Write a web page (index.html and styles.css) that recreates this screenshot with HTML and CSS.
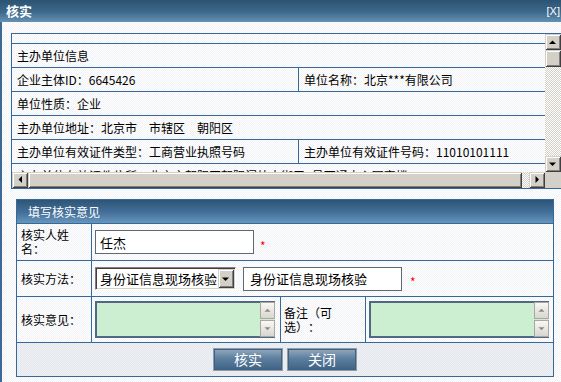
FILE: index.html
```html
<!DOCTYPE html>
<html>
<head>
	<meta charset="utf-8">
	<title>核实</title>
	<link rel="stylesheet" href="styles.css">
</head>
<body>
	<div class="dialog">
		<div class="dialog-title">
			<span class="dialog-name">核实</span>
			<span class="dialog-close">[X]</span>
		</div>
		<div class="dialog-body">
			<!-- unit info, scrolled view -->
			<div class="scroll-box">
				<div class="scroll-view">
					<div class="info-grid">
						<div class="info-cell wide"></div>
						<div class="info-cell wide">主办单位信息</div>
						<div class="info-cell">企业主体ID：6645426</div>
						<div class="info-cell">单位名称：北京***有限公司</div>
						<div class="info-cell wide">单位性质：企业</div>
						<div class="info-cell wide">主办单位地址：北京市　市辖区　朝阳区</div>
						<div class="info-cell">主办单位有效证件类型：工商营业执照号码</div>
						<div class="info-cell">主办单位有效证件号码：11010101111</div>
						<div class="info-cell wide">主办单位有效证件住所：北京市朝阳区朝阳门外大街甲6号万通中心写字楼</div>
					</div>
				</div>
				<div class="vscroll">
					<span class="sb-btn"><svg width="16" height="16" viewBox="0 0 16 16"><path d="M4 10h7L7.5 6.5z"/></svg></span>
					<span class="sb-thumb"></span>
					<span class="sb-track"></span>
					<span class="sb-btn"><svg width="16" height="16" viewBox="0 0 16 16"><path d="M4 6.5h7L7.5 10z"/></svg></span>
				</div>
				<div class="hscroll">
					<span class="sb-btn"><svg width="16" height="16" viewBox="0 0 16 16"><path d="M10 4v7L6.5 7.5z"/></svg></span>
					<span class="sb-thumb"></span>
					<span class="sb-track"></span>
					<span class="sb-btn"><svg width="16" height="16" viewBox="0 0 16 16"><path d="M6.5 4v7L10 7.5z"/></svg></span>
				</div>
				<div class="sb-corner"></div>
			</div>

			<!-- check form -->
			<div class="form-box">
				<div class="form-title">填写核实意见</div>
				<div class="form-grid">
					<div class="f-label">核实人姓名：</div>
					<div class="f-field span3">
						<input class="text-input" type="text" value="任杰">
						<span class="req">*</span>
					</div>

					<div class="f-label">核实方法：</div>
					<div class="f-field span3">
						<span class="combo">
							<span class="combo-text">身份证信息现场核验</span>
							<span class="combo-btn"><svg width="16" height="16" viewBox="0 0 16 16"><path d="M4 6.5h7L7.5 10z"/></svg></span>
						</span>
						<input class="text-input second" type="text" value="身份证信息现场核验">
						<span class="req far">*</span>
					</div>

					<div class="f-label">核实意见：</div>
					<div class="f-field">
						<div class="memo">
							<div class="memo-bar">
								<span class="memo-btn"><svg width="15" height="15" viewBox="0 0 15 15"><path d="M4 9h7L7.5 5.5z"/></svg></span>
								<span class="memo-btn"><svg width="15" height="15" viewBox="0 0 15 15"><path d="M4 6h7L7.5 9.5z"/></svg></span>
							</div>
						</div>
					</div>
					<div class="f-label narrow">备注（可选）：</div>
					<div class="f-field">
						<div class="memo">
							<div class="memo-bar">
								<span class="memo-btn"><svg width="15" height="15" viewBox="0 0 15 15"><path d="M4 9h7L7.5 5.5z"/></svg></span>
								<span class="memo-btn"><svg width="15" height="15" viewBox="0 0 15 15"><path d="M4 6h7L7.5 9.5z"/></svg></span>
							</div>
						</div>
					</div>
				</div>
				<div class="form-actions">
					<button class="btn">核实</button>
					<button class="btn">关闭</button>
				</div>
			</div>
		</div>
	</div>
</body>
</html>
```

FILE: styles.css
```css
*{
	box-sizing: border-box;
}
html, body{
	margin: 0;
}
body{
	width: 561px;
	height: 382px;
	overflow: hidden;
	font-family: "Noto Sans CJK SC", sans-serif;
	font-size: 12px;
	color: #000;
	background: #fff;
	text-spacing-trim: space-all;
}
.dialog{
	width: 580px;
	height: 382px;
	display: flex;
	flex-direction: column;
}
.dialog-title{
	flex: none;
	height: 22px;
	display: flex;
	align-items: center;
	padding: 0 20px 0 6px;
	color: #fff;
	background: linear-gradient(#2c5373, #3d698c 55%, #6592b4);
}
.dialog-name{
	font-size: 13px;
	font-weight: bold;
	line-height: 22px;
}
.dialog-close{
	margin-left: auto;
	font-family: "Liberation Sans", sans-serif;
	font-size: 11px;
}
.dialog-body{
	flex: 1;
	border-left: 2px solid #3d6a93;
	padding: 11px 0 0 9px;
	background: repeating-conic-gradient(#f1f3f6 0 25%, #fff 0 50%) 0 0 / 2px 2px;
}

/* info box with classic scrollbars */
.scroll-box{
	display: grid;
	grid-template-columns: 533px 16px;
	grid-template-rows: 138px 16px;
	width: 551px;
	border: 1px solid #36699b;
}
.scroll-view{
	overflow: hidden;
}
.info-grid{
	display: grid;
	grid-template-columns: 286px 1fr;
	grid-template-rows: 9px;
	grid-auto-rows: 23px;
	gap: 1px;
	background: #36699b;
}
.info-cell{
	padding: 0 5px;
	line-height: 23px;
	white-space: nowrap;
	overflow: hidden;
	background: repeating-conic-gradient(#f1f3f6 0 25%, #fff 0 50%) 0 0 / 2px 2px;
}
.wide{
	grid-column: 1 / -1;
}
.vscroll{
	display: flex;
	flex-direction: column;
}
.hscroll{
	display: flex;
}
.sb-btn, .sb-thumb, .combo-btn{
	flex: none;
	width: 16px;
	height: 16px;
	display: flex;
	background: #d4d0c8;
	box-shadow: inset 1px 1px #d4d0c8, inset -1px -1px #404040, inset 2px 2px #fff, inset -2px -2px #808080;
}
.vscroll .sb-thumb{
	height: 17px;
}
.hscroll .sb-thumb{
	flex: 1;
	width: auto;
}
.sb-track{
	flex: 1;
	background: repeating-conic-gradient(#d4d0c8 0 25%, #fff 0 50%) 0 0 / 2px 2px;
}
.hscroll .sb-track{
	flex: none;
	width: 7px;
}
.sb-corner{
	background: #d4d0c8;
}

/* form */
.form-box{
	width: 538px;
	margin: 10px 0 0 5px;
	border: 1px solid #36699b;
}
.form-title{
	height: 24px;
	line-height: 23px;
	padding-left: 11px;
	color: #fff;
	border-bottom: 1px solid #36699b;
	background: linear-gradient(#2d5576, #44709a 55%, #6796bc);
}
.form-grid{
	display: grid;
	grid-template-columns: 74px 188px 84px 187px;
	grid-template-rows: 36px 35px 45px;
	gap: 1px;
	background: #36699b;
}
.f-label, .f-field{
	display: flex;
	align-items: center;
	background: repeating-conic-gradient(#f1f3f6 0 25%, #fff 0 50%) 0 0 / 2px 2px;
}
.f-label{
	padding-left: 4px;
	line-height: 14px;
}
.f-label.narrow{
	padding-left: 3px;
	padding-right: 22px;
}
.f-field{
	padding-left: 3px;
}
.span3{
	grid-column: span 3;
}
.text-input{
	width: 159px;
	height: 24px;
	margin: 0;
	padding: 0 4px;
	border: 1px solid #5d6873;
	font: 13px "Noto Sans CJK SC", sans-serif;
	color: #000;
	background: #fff;
	outline: none;
}
.text-input.second{
	margin-left: 7px;
	padding-left: 6px;
}
.req{
	margin-left: 6px;
	padding-top: 7px;
	color: #f00;
	font-size: 12px;
	line-height: 12px;
}
.req.far{
	margin-left: 8px;
}
.combo{
	display: flex;
	width: 141px;
	height: 23px;
	border: 1px solid;
	border-color: #808080 #fff #fff #808080;
	background: #fff;
	padding: 1px;
	box-shadow: inset 1px 1px #404040, inset -1px -1px #d4d0c8;
}
.combo-text{
	flex: 1;
	padding-left: 3px;
	font-size: 13px;
	line-height: 19px;
	white-space: nowrap;
	overflow: hidden;
}
.combo-btn{
	height: 19px;
	align-items: center;
}
.memo{
	display: flex;
	width: 180px;
	height: 37px;
	border: 2px solid #4f6982;
	border-right: 0;
	background: #ccefd1;
}
.memo-bar{
	margin-left: auto;
	margin-top: -1px;
	width: 15px;
	display: flex;
	flex-direction: column;
	gap: 1px;
}
.memo-btn{
	flex: 1;
	display: flex;
	align-items: center;
	border: 1px solid #a9a7a0;
	background: linear-gradient(#f8f8f5, #d8d6ce);
	fill: #8a8a8a;
}
.form-actions{
	height: 34px;
	display: flex;
	align-items: center;
	justify-content: center;
	gap: 4px;
	border-top: 1px solid #36699b;
	background: repeating-conic-gradient(#e4e7ec 0 25%, #eef0f4 0 50%) 0 0 / 2px 2px;
}
.btn{
	width: 70px;
	height: 23px;
	padding: 0;
	border: 1px solid #8e9cab;
	box-shadow: inset 0 0 0 1px #40607f;
	background: linear-gradient(#93a9be, #5d7f9f 45%, #3f6283);
	color: #fff;
	font: 14px/19px "Noto Sans CJK SC", sans-serif;
	cursor: pointer;
}
```
